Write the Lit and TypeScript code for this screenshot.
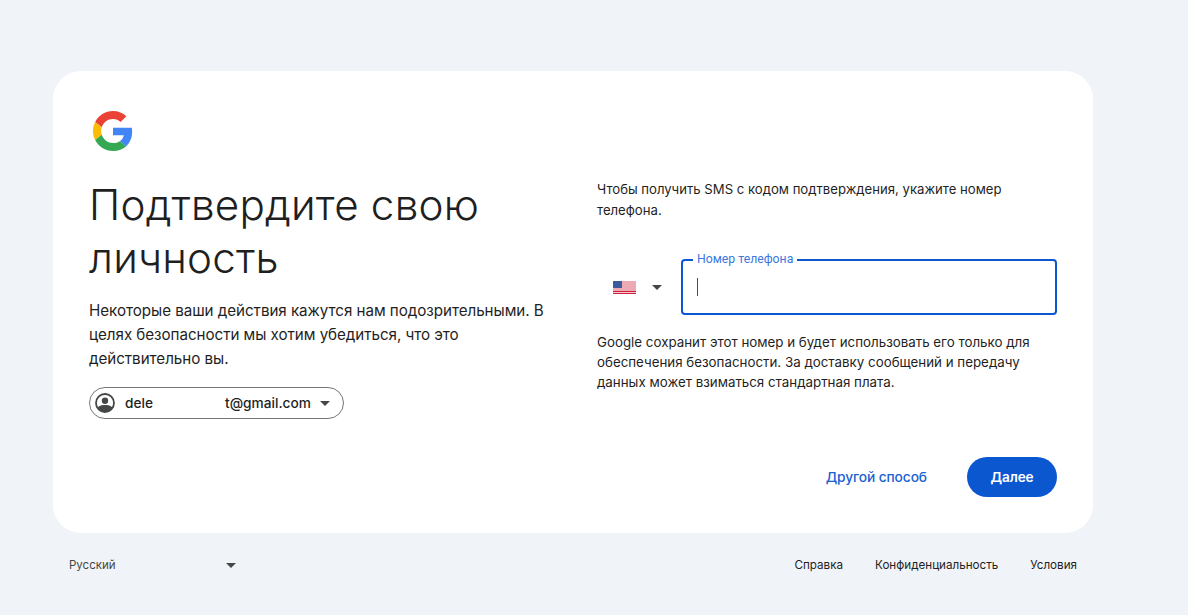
import { LitElement, html, css } from "lit";
import { customElement } from "lit/decorators.js";

const caret = html`<svg class="caret" width="10" height="5" viewBox="0 0 10 5"><path d="M0 0h10L5 5z" fill="currentColor"/></svg>`;

@customElement("app-root")
export class AppRoot extends LitElement {
  static styles = css`
    :host { display: block; width: 1188px; height: 615px; background: #f0f4f9; overflow: hidden; font-family: Inter, "Noto Sans", sans-serif; color: #1f1f1f; }
    .page { display: flex; flex-direction: column; padding: 71px 95px 0 53px; }
    .card { height: 462px; box-sizing: border-box; background: #fff; border-radius: 28px; padding: 40px 36px 36px; display: flex; flex-direction: column; }
    .cols { display: flex; flex: 1; }
    .left { width: 508px; flex: none; }
    .right { flex: 1; padding-top: 68px; display: flex; flex-direction: column; }
    .logo { display: block; margin-left: 4px; }
    h1 { margin: 27px 0 0; font-size: 42.2px; line-height: 53px; font-weight: 300; letter-spacing: 0.2px; width: 440px; color: #1f1f1f; }
    .desc { margin: 15px 0 0; font-size: 15.2px; line-height: 24px; width: 470px; letter-spacing: -0.05px; }
    .acct { margin-top: 16px; width: 255px; height: 32px; box-sizing: border-box; border: 1px solid #747775; border-radius: 16px; display: flex; align-items: center; padding: 0 13px 0 5px; font-size: 13.7px; font-weight: 500; }
    .acct .avatar { flex: none; margin-right: 10px; }
    .acct .n1 { width: 100px; }
    .acct .caret { margin-left: auto; color: #444746; }
    .small { margin: 0; font-size: 13.15px; line-height: 21px; width: 440px; }
    .phone { display: flex; align-items: center; margin-top: 38px; }
    .country { width: 84px; flex: none; display: flex; align-items: center; padding-left: 16px; box-sizing: border-box; color: #444746; }
    .country .caret { margin-left: 16px; }
    .field { position: relative; flex: 1; height: 56px; box-sizing: border-box; border: 2px solid #0b57d0; border-radius: 4px; display: flex; align-items: center; padding-left: 14px; }
    .legend { position: absolute; left: 10px; top: -9px; padding: 0 4px; background: #fff; font: 12.25px/14px Roboto, sans-serif; color: #3b78e0; }
    .cursor { width: 1px; height: 18px; background: #0b57d0; }
    .note { margin-top: 17px; font-size: 13.33px; line-height: 20px; }
    .actions { margin-top: auto; display: flex; justify-content: flex-end; align-items: center; gap: 40px; }
    .link { font-size: 13.75px; font-weight: 500; color: #1a61d4; letter-spacing: -0.1px; }
    .btn { width: 90px; height: 40px; border-radius: 20px; background: #0b57d0; color: #fff; display: flex; align-items: center; justify-content: center; font-size: 13.6px; font-weight: 600; letter-spacing: -0.1px; }
    .foot { display: flex; align-items: center; font-size: 11.65px; color: #444746; margin-top: 24px; height: 16px; padding: 0 16px; }
    .lang { width: 167px; display: flex; justify-content: space-between; align-items: center; font-size: 11.5px; }
    .lang .caret { color: #444746; width: 10px; }
    .links { margin-left: auto; display: flex; gap: 32px; color: #1f1f1f; }
  `;

  render() {
    return html`
      <div class="page">
        <div class="card">
          <div class="cols">
            <div class="left">
              <svg class="logo" width="40" height="40" viewBox="0 0 48 48">
                <path fill="#EA4335" d="M24 9.5c3.54 0 6.71 1.22 9.21 3.6l6.85-6.85C35.9 2.38 30.47 0 24 0 14.62 0 6.51 5.38 2.56 13.22l7.98 6.19C12.43 13.72 17.74 9.5 24 9.5z"/>
                <path fill="#4285F4" d="M46.98 24.55c0-1.57-.15-3.09-.38-4.55H24v9.02h12.94c-.58 2.96-2.26 5.48-4.78 7.18l7.73 6c4.51-4.18 7.09-10.36 7.09-17.65z"/>
                <path fill="#FBBC05" d="M10.53 28.59c-.48-1.45-.76-2.99-.76-4.59s.27-3.14.76-4.59l-7.98-6.19C.92 16.46 0 20.12 0 24c0 3.88.92 7.54 2.56 10.78l7.97-6.19z"/>
                <path fill="#34A853" d="M24 48c6.48 0 11.93-2.13 15.89-5.81l-7.73-6c-2.15 1.45-4.92 2.3-8.16 2.3-6.26 0-11.57-4.22-13.47-9.91l-7.98 6.19C6.51 42.62 14.62 48 24 48z"/>
              </svg>
              <h1>Подтвердите свою личность</h1>
              <p class="desc">Некоторые ваши действия кажутся нам подозрительными. В целях безопасности мы хотим убедиться, что это действительно вы.</p>
              <div class="acct">
                <svg class="avatar" width="20" height="20" viewBox="0 0 20 20">
                  <circle cx="10" cy="10" r="9" fill="none" stroke="#444746" stroke-width="1.8"/>
                  <circle cx="10" cy="7.8" r="3.2" fill="#444746"/>
                  <path d="M2.6 14.5C4.5 12.6 7 12 10 12s5.5.6 7.4 2.5A9 9 0 0 1 10 19a9 9 0 0 1-7.4-4.5z" fill="#444746"/>
                </svg>
                <span class="n1">dele</span><span>t@gmail.com</span>${caret}
              </div>
            </div>
            <div class="right">
              <p class="small">Чтобы получить SMS с кодом подтверждения, укажите номер телефона.</p>
              <div class="phone">
                <div class="country">
                  <svg width="23" height="13" viewBox="0 0 23 13">
                    <rect width="23" height="13" fill="#f3c9cf"/>
                    <path d="M0 1h23M0 3h23M0 5h23M0 7h23M0 9h23" stroke="#e58a97" stroke-width="1"/>
                    <path d="M0 10.5h23M0 12.5h23" stroke="#cf1f3c" stroke-width="1"/>
                    <rect width="9" height="7" fill="#3d5a9e"/>
                  </svg>
                  ${caret}
                </div>
                <div class="field"><span class="legend">Номер телефона</span><span class="cursor"></span></div>
              </div>
              <p class="small note">Google сохранит этот номер и будет использовать его только для обеспечения безопасности. За доставку сообщений и передачу данных может взиматься стандартная плата.</p>
              <div class="actions"><span class="link">Другой способ</span><span class="btn">Далее</span></div>
            </div>
          </div>
        </div>
        <div class="foot">
          <div class="lang"><span>Русский</span>${caret}</div>
          <div class="links"><span>Справка</span><span>Конфиденциальность</span><span>Условия</span></div>
        </div>
      </div>
    `;
  }
}
